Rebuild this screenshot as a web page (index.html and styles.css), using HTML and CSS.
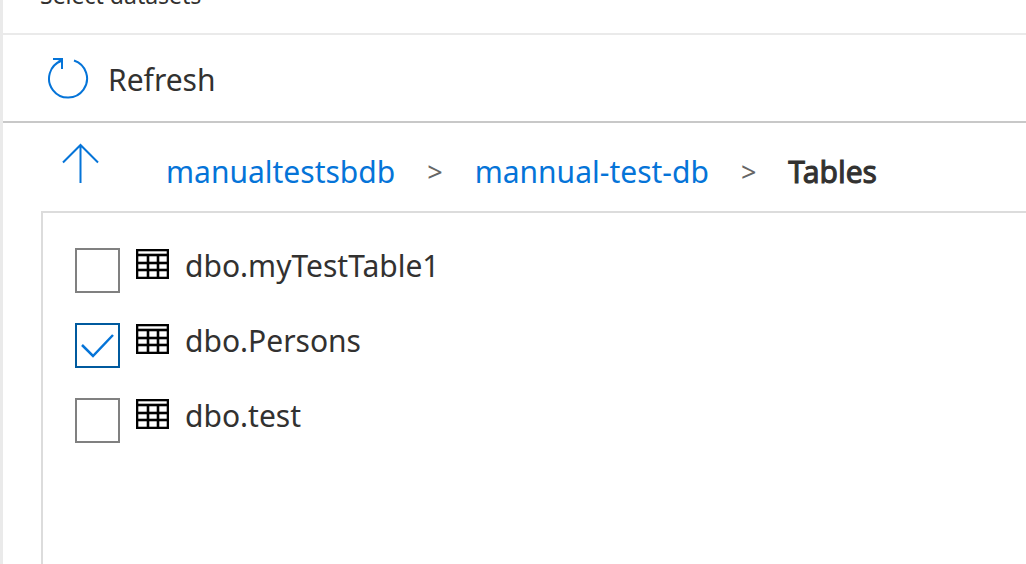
FILE: index.html
```html
<!DOCTYPE html>
<html lang="en">
<head>
<meta charset="utf-8">
<title>Select datasets</title>
<link rel="stylesheet" href="styles.css">
</head>
<body>
<main class="blade">
  <header class="blade-header"><h1 class="blade-title">Select datasets</h1></header>
  <div class="toolbar">
    <button class="refresh" type="button">
      <svg class="refresh-icon" viewBox="0 0 42 42" aria-hidden="true">
        <path d="M27 3.500A19 19 0 1 1 14.500 3.700" />
        <path class="refresh-head" d="M6 2H15V12M11 5L15 3" />
      </svg>
      <span class="refresh-label">Refresh</span>
    </button>
  </div>
  <nav class="path" aria-label="Breadcrumb">
    <button class="up" type="button" aria-label="Up one level">
      <svg class="up-icon" viewBox="0 0 38 42" aria-hidden="true"><path d="M19.500 41V3M2 20.500L19.500 3L37 20.500" /></svg>
    </button>
    <ol class="crumbs">
      <li><a href="#server">manualtestsbdb</a></li>
      <li class="sep" aria-hidden="true">&gt;</li>
      <li><a href="#database">mannual-test-db</a></li>
      <li class="sep" aria-hidden="true">&gt;</li>
      <li class="current" aria-current="page">Tables</li>
    </ol>
  </nav>
  <svg class="sprite" aria-hidden="true">
    <symbol id="table" viewBox="0 0 33 30">
      <path fill="#000" d="M0 0H33V30H0Z" />
      <path fill="#fff" stroke="#000" stroke-width=".6" d="M2 2H31V5H2ZM2 7H11V13H2ZM13 7H21V13H13ZM23 7H31V13H23ZM2 15H11V20H2ZM13 15H21V20H13ZM23 15H31V20H23ZM2 22H11V28H2ZM13 22H21V28H13ZM23 22H31V28H23Z" />
    </symbol>
  </svg>
  <section class="list">
    <div class="row">
      <input class="check" type="checkbox" id="t1">
      <label class="name" for="t1"><svg class="table-icon" aria-hidden="true"><use href="#table" /></svg>dbo.myTestTable1</label>
    </div>
    <div class="row">
      <input class="check" type="checkbox" id="t2" checked>
      <label class="name" for="t2"><svg class="table-icon" aria-hidden="true"><use href="#table" /></svg>dbo.Persons</label>
    </div>
    <div class="row">
      <input class="check" type="checkbox" id="t3">
      <label class="name" for="t3"><svg class="table-icon" aria-hidden="true"><use href="#table" /></svg>dbo.test</label>
    </div>
  </section>
</main>
</body>
</html>
```
FILE: styles.css
```css
* { box-sizing: border-box; }
body {
  margin: 0;
  background: #fff;
  color: #323130;
  font: 30px/40px "Noto Sans", "Open Sans", sans-serif;
}
.blade {
  display: flex;
  flex-direction: column;
  min-height: 100vh;
  border-left: 3px solid #eaeaea;
}
.blade-header {
  display: flex;
  align-items: flex-end;
  height: 35px;
  padding: 0 37px 23px;
  border-bottom: 2px solid #eaeaea;
}
.blade-title {
  margin: 0;
  font-size: 23px;
  line-height: 30px;
  font-weight: 400;
}
.toolbar {
  padding: 20px 44px;
  border-bottom: 2px solid #c8c8c8;
}
button {
  padding: 0;
  border: 0;
  background: none;
  color: inherit;
  font: inherit;
}
.refresh {
  display: flex;
  align-items: center;
  gap: 19px;
  height: 46px;
}
.refresh-label { padding-top: 3px; }
.refresh-icon, .up-icon {
  display: block;
  width: 42px;
  height: 42px;
  fill: none;
  stroke: #0574d8;
  stroke-width: 2;
}
.path {
  display: flex;
  align-items: flex-start;
  gap: 67px;
  height: 88px;
  padding: 19px 58px 0;
}
.up-icon { width: 38px; }
.crumbs {
  display: flex;
  gap: 32px;
  margin: 0;
  padding: 10px 0 0;
  list-style: none;
  white-space: nowrap;
}
a { color: #0574d8; text-decoration: none; }
.sep { color: #666; font-size: 27px; }
.current { -webkit-text-stroke: 1px currentColor; }
.list {
  flex: 1;
  margin-left: 38px;
  padding: 20px 32px;
  border: solid #dcdcdc;
  border-width: 2px 0 0 2px;
}
.row {
  display: flex;
  align-items: center;
  gap: 16px;
  height: 75px;
}
.check {
  appearance: none;
  width: 45px;
  height: 45px;
  margin: 0;
  border: 2px solid #808080;
  background: #fff;
}
.check:checked {
  border-color: #005a9e;
  background: #fff url("data:image/svg+xml,%3Csvg xmlns='http://www.w3.org/2000/svg' viewBox='0 0 41 41'%3E%3Cpath d='M5 20L16 31L36 10' fill='none' stroke='%230574d8' stroke-width='2.500'/%3E%3C/svg%3E");
}
.name {
  display: flex;
  align-items: center;
  gap: 16px;
  padding-bottom: 10px;
}
.table-icon {
  width: 33px;
  height: 30px;
  margin-bottom: 4px;
}
.sprite { display: none; }
```
